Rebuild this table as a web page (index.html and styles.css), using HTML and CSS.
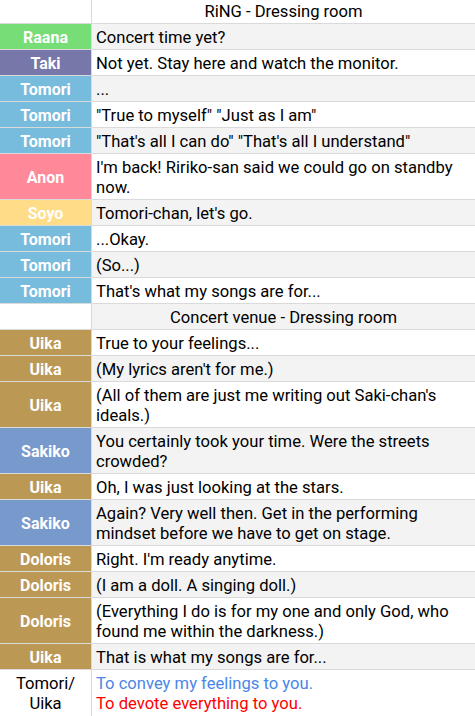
FILE: index.html
```html
<!DOCTYPE html>
<html>
<head>
<meta charset="utf-8">
<link rel="stylesheet" href="styles.css">
</head>
<body>
<table class="script">
<tr class="first"><td class="name blank"></td><td class="line head">RiNG - Dressing room</td></tr>
<tr><td class="name raana">Raana</td><td class="line">Concert time yet?</td></tr>
<tr><td class="name taki">Taki</td><td class="line">Not yet. Stay here and watch the monitor.</td></tr>
<tr><td class="name tomori">Tomori</td><td class="line">...</td></tr>
<tr><td class="name tomori">Tomori</td><td class="line">"True to myself" "Just as I am"</td></tr>
<tr><td class="name tomori">Tomori</td><td class="line">"That's all I can do" "That's all I understand"</td></tr>
<tr><td class="name anon">Anon</td><td class="line">I'm back! Ririko-san said we could go on standby now.</td></tr>
<tr><td class="name soyo">Soyo</td><td class="line">Tomori-chan, let's go.</td></tr>
<tr><td class="name tomori">Tomori</td><td class="line">...Okay.</td></tr>
<tr><td class="name tomori">Tomori</td><td class="line">(So...)</td></tr>
<tr><td class="name tomori">Tomori</td><td class="line">That's what my songs are for...</td></tr>
<tr><td class="name blank"></td><td class="line head">Concert venue - Dressing room</td></tr>
<tr><td class="name uika">Uika</td><td class="line">True to your feelings...</td></tr>
<tr><td class="name uika">Uika</td><td class="line">(My lyrics aren't for me.)</td></tr>
<tr><td class="name uika">Uika</td><td class="line">(All of them are just me writing out Saki-chan's ideals.)</td></tr>
<tr><td class="name sakiko">Sakiko</td><td class="line">You certainly took your time. Were the streets crowded?</td></tr>
<tr><td class="name uika">Uika</td><td class="line">Oh, I was just looking at the stars.</td></tr>
<tr><td class="name sakiko">Sakiko</td><td class="line">Again? Very well then. Get in the performing mindset before we have to get on stage.</td></tr>
<tr><td class="name uika">Doloris</td><td class="line">Right. I'm ready anytime.</td></tr>
<tr><td class="name uika">Doloris</td><td class="line">(I am a doll. A singing doll.)</td></tr>
<tr><td class="name uika">Doloris</td><td class="line">(Everything I do is for my one and only God, who found me within the darkness.)</td></tr>
<tr><td class="name uika">Uika</td><td class="line">That is what my songs are for...</td></tr>
<tr class="last"><td class="name plain">Tomori/<br>Uika</td><td class="line"><span class="blue">To convey my feelings to you.</span><br><span class="red">To devote everything to you.</span></td></tr>
</table>
</body>
</html>
```

FILE: styles.css
```css
html, body {
  margin: 0;
  padding: 0;
  background: #ffffff;
}
.script {
  border-collapse: collapse;
  width: 475px;
  table-layout: fixed;
  font-family: Roboto, "Liberation Sans", sans-serif;
  font-size: 16px;
  line-height: 20px;
  color: #000;
}
.script td {
  border-bottom: 1px solid #dadada;
  padding: 4px 4px 1px 4px;
  vertical-align: middle;
}
.script .first td {
  padding-top: 2px;
  padding-bottom: 1px;
}
.script .last td {
  border-bottom: none;
  padding-bottom: 2px;
}
.name {
  width: 83px;
  text-align: center;
  font-weight: bold;
  color: #fff;
  border-right: 1px solid #dadada;
}
.line {
  text-align: left;
  font-size: 16.6px;
}
.script tr:nth-child(even) .line {
  background: #f3f3f3;
}
.line.head {
  text-align: center;
}
.blank { background: #fff; }
.raana { background: #77dd77; }
.taki { background: #7777aa; }
.tomori { background: #77bbdd; }
.anon { background: #ff8899; }
.soyo { background: #ffdd88; }
.uika { background: #bb9955; }
.sakiko { background: #7799cc; }
.plain {
  background: #fff;
  color: #000;
  font-weight: normal;
  font-size: 16.6px;
}
.blue { color: #4a86e8; }
.red { color: #ff0000; }
```
